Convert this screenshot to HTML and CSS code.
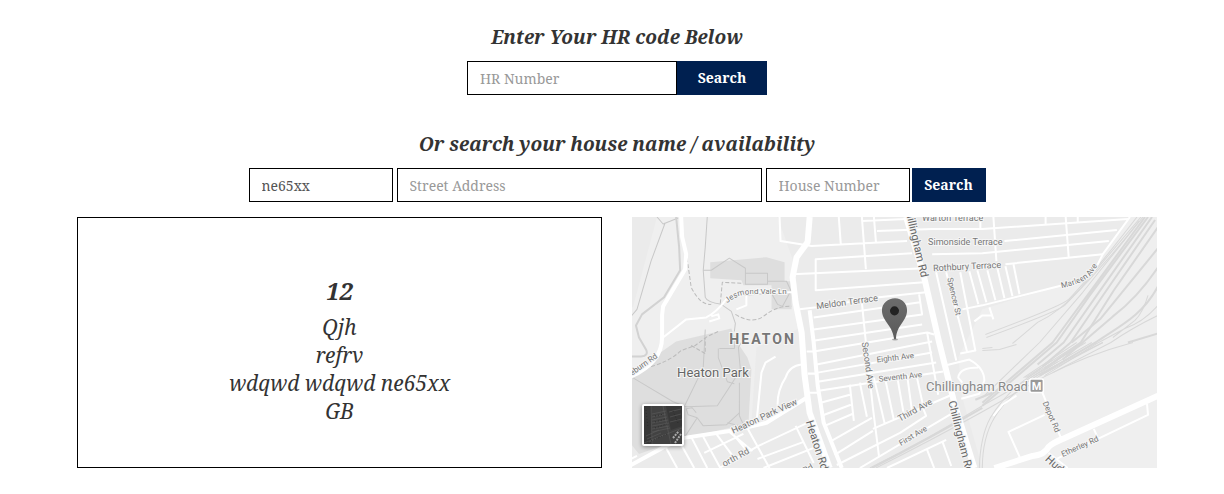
FILE: index.html
```html
<!DOCTYPE html>
<html lang="en">
<head>
    <meta charset="UTF-8">
    <meta name="viewport" content="width=device-width, initial-scale=1.0">
    <title>House search</title>
    <link rel="stylesheet" href="styles.css">
</head>
<body>
    <main class="page">
        <form class="search">
            <h2><label for="hr-number">Enter Your HR code Below</label></h2>
            <div class="hr-row">
                <input type="text" id="hr-number" placeholder="HR Number">
                <button type="submit">Search</button>
            </div>
        </form>

        <form class="search">
            <h2>Or search your house name / availability</h2>
            <div class="house-row">
                <input type="text" class="short" aria-label="Postcode" value="ne65xx">
                <input type="text" class="long" aria-label="Street Address" placeholder="Street Address">
                <input type="text" class="short" aria-label="House Number" placeholder="House Number">
                <button type="submit">Search</button>
            </div>
        </form>

        <section class="results">
            <div class="address">
                <h3>12</h3>
                <p>Qjh<br>refrv<br>wdqwd wdqwd ne65xx<br>GB</p>
            </div>

            <div class="map">
                <svg class="map-canvas" viewBox="0 0 525 250" preserveAspectRatio="xMidYMid slice" role="img" aria-label="Map of Heaton">
                    <defs>
                        <path id="jesmond" d="M96 86Q106 77 119 77L160 77"/>
                        <path id="marleen" d="M429 71Q451 66 458 58Q464 50 472 37"/>
                        <linearGradient id="pin" x1="0" y1="0" x2="0" y2="1">
                            <stop offset="0" stop-color="#6c6c6c"/>
                            <stop offset="1" stop-color="#5a5a5a"/>
                        </linearGradient>
                    </defs>

                    <!-- built-up areas -->
                    <path class="urban" d="M146 0H497L470 38L460 58L350 92L326 140L330 180L350 250H0V225L120 205L125 130L170 110L162 45Z"/>
                    <path class="urban" d="M0 0H26L2 90L0 90Z"/>

                    <!-- parks -->
                    <path class="park" d="M79 45L135 40L153 45V64H160V92H140V68H112L110 63L79 61Z"/>
                    <path class="park" d="M0 160L28 136L45 124L100 111L104 122L116 140L120 152L117 206L53 220L8 236L0 226Z"/>

                    <!-- railways -->
                    <g class="rail">
                        <path d="M504 0C490 18 462 55 436 82Q428 89 353 117M506 4C480 38 450 70 432 88Q425 94 354 120"/>
                        <path d="M508 0L447 72Q428 94 405 105L380 126M510 0L450 75L407 125L350 180"/>
                        <path d="M525 88Q510 105 492 111L464 126L412 158M525 98Q500 110 478 125L420 155M515 78Q510 95 502 103L480 120"/>
                        <path d="M500 125Q455 137 412 159L350 194Q300 222 244 250M450 125Q400 161 350 188Q300 219 238 250M470 125L415 152"/>
                        <path d="M350 133L367 132L384 127M350 131L360 130M420 142L390 164Q370 180 358 200Q348 218 347 250M425 144L394 165Q372 183 362 200Q350 220 350 250"/>
                        <path d="M444 125L391 160M448 125L393 160M453 125L395 160M459 125L398 160M464 125L401 160M470 125L404 160"/>
                    </g>
                    <g class="rail wide">
                        <path d="M495 125L525 116M343 182L360 175M240 250Q300 219 350 190"/>
                        <path d="M512 0L420 125L350 185M515 0L457 78L424 125L350 188M519 0L466 75L431 125L405 147M522 3L473 74L438 125L410 149M525 10L481 73L448 125L412 151"/>
                        <path d="M525 31L468 101L439 125M525 50Q505 80 480 99L430 142M525 69C510 97 490 107 464 124L407 158"/>
                    </g>

                    <!-- footpaths -->
                    <g class="path">
                        <path d="M26 0L32 7L47 1M34 6L20 44L6 92L0 99M76 0L74 30L72 53L74 80Q76 85 90 87"/>
                        <path d="M72 53H80L98 41L114 51V67H136V56H114M136 64H155L160 75M90 87L100 94L104 106L103 114M113 78L140 76L146 87L151 89L158 76"/>
                        <path d="M0 159L42 184L55 189L86 188L101 165L109 152L107 130L110 125M54 187L72 150L74 112M53 220L66 200L72 208L95 207L108 195M88 131H103L104 118M87 131V140L96 164L103 166M66 200L57 197L55 191L61 190L65 195M108 165V198L112 207M96 205L108 208"/>
                    </g>
                    <path class="path dashed" d="M55 35L60 70Q69 88 80 87M89 86L91 65L110 66M104 97Q120 107 132 99Q145 88 160 89M20 149Q38 144 50 133L64 128L76 119L87 114M60 128L74 136V120"/>
                    <path class="path thick" d="M45 0L48 30L49 53L33 80L11 97L5 108L8 120L15 132Q18 138 10 139L0 139"/>

                    <!-- side streets -->
                    <g class="street">
                        <path d="M148 0L149 24L180 29L275 24M207 0L209 27M230 0L234 52M242 0L244 25M230 4L275 2M245 14L300 12L350 12L495 2M372 24L484 13M300 37L350 36L476 24M373 47L470 37"/>
                        <path d="M161 57L292 51M280 36L184 42V73L292 65M168 92L185 90L247 80L294 75M361 0L364 44M433 0L436 40M413 0V7M445 0V5M348 0V11"/>
                        <path d="M182 100L288 85M182 112L290 97L287 77M183 123L290 107M182 134L295 115L302 117M185 147L300 124M186 155L300 135M186 164L304 145M187 173L311 154M175 134H183M176 156H186M176 175H187M295 115L306 177"/>
                        <path d="M230 85L234 125L241 190L247 238M218 167L222 203M228 165L235 199M189 185L218 177M190 198L219 187M193 208L221 196M198 224L240 200M203 237L241 213M205 247L268 215L294 198L290 188"/>
                        <path d="M242 160L253 207M253 160L262 203M265 158L272 198M275 157L280 194M284 156L291 188M241 211L322 176M228 250L319 196"/>
                        <path d="M304 55L324 143M314 55L335 135M328 55L343 133L328 136M337 54L346 87M345 53L354 85M355 53L363 83M365 51L372 81M373 49L380 79M381 47L387 77"/>
                        <path d="M497 0L470 37L464 49Q457 62 430 68L350 88L330 92M342 104L350 98H360M357 90L361 102"/>
                        <path d="M313 148L337 142Q352 150 352 163L347 176L329 181M346 150Q327 150 326 160L330 165M361 198L370 187L384 178"/>
                        <path d="M255 250L314 222M295 232L302 250M310 223L319 248M409 173L429 222M412 197L376 214L388 241M461 211L465 220M424 241L463 222L515 197L514 186M416 235L435 250"/>
                        <path d="M32 120L55 102L75 100Q85 95 95 82Q105 75 125 75H163M78 104L88 101L87 97L80 99M105 92L115 88V78"/>
                        <path d="M144 139L134 145L130 155L125 205M170 147Q158 148 154 160Q146 172 146 187"/>
                        <path d="M88 250L127 228L180 203M113 205L138 250M98 214L121 233M85 216L105 243M71 217L89 250M60 219L76 250M48 223L63 250M35 230L46 250M0 241L6 238M73 235L112 216M126 241L172 224M132 250L182 230M164 208L182 245M99 213L118 236"/>
                    </g>
                    <path class="street medium" d="M50 0L51 20L55 37L54 52L32 89L31 98V120Q31 145 0 159"/>
                    <path class="street medium" d="M0 247L35 228L53 220L100 213L135 205L175 180M178 93L182 125L186 168L192 205L210 250"/>

                    <!-- main roads -->
                    <path class="road" d="M178 0L176 25L165 40L161 60L164 85L170 115L173 158L178 195L198 250"/>
                    <path class="road" d="M274 0L292 60L307 125L322 185L342 250M362 250L400 238Q412 237 416 229Q420 225 430 221L525 178"/>

                    <g class="label">
                        <text x="290" y="4">Warton Terrace</text>
                        <text x="296" y="28">Simonside Terrace</text>
                        <text transform="translate(301 54) rotate(-3)">Rothbury Terrace</text>
                        <text transform="translate(185 92) rotate(-8)">Meldon Terrace</text>
                        <text class="small" transform="translate(315 61) rotate(77)">Spencer St</text>
                        <text class="small"><textPath href="#jesmond">Jesmond Vale Ln</textPath></text>
                        <text class="small"><textPath href="#marleen">Marleen Ave</textPath></text>
                        <text transform="translate(230 125) rotate(82)">Second Ave</text>
                        <text class="small" transform="translate(245 145) rotate(-7)">Eighth Ave</text>
                        <text class="small" transform="translate(247 164) rotate(-6)">Seventh Ave</text>
                        <text transform="translate(268 204) rotate(-29)">Third Ave</text>
                        <text class="small" transform="translate(269 228) rotate(-31)">First Ave</text>
                        <text transform="translate(102 216) rotate(-25)">Heaton Park View</text>
                        <text class="small" transform="translate(1 158) rotate(-35)">eburn Rd</text>
                        <text transform="translate(93 249) rotate(-29)">orth Rd</text>
                        <text transform="translate(173 256) rotate(-29)">Rd</text>
                        <text class="small" transform="translate(410 185) rotate(67)">Depot Rd</text>
                        <text class="small" transform="translate(430 239) rotate(-24)">Etherley Rd</text>
                    </g>
                    <g class="label major">
                        <text transform="translate(274 -4) rotate(77)">hillingham Rd</text>
                        <text transform="translate(316 184) rotate(76)">Chillingham Rd</text>
                        <text transform="translate(174 204) rotate(72)">Heaton Rd</text>
                        <text transform="translate(412 242) rotate(42)">Hud</text>
                    </g>
                    <text class="label district" x="98" y="126">HEATON</text>
                    <text class="label place" x="46" y="159">Heaton Park</text>
                    <text class="label place station" x="294" y="173">Chillingham Road</text>

                    <!-- metro sign -->
                    <rect x="398" y="162" width="12" height="12" rx="1" fill="#999" stroke="#fff" stroke-width="3" paint-order="stroke"/>
                    <text class="metro" x="404" y="172">M</text>

                    <!-- marker -->
                    <ellipse cx="263" cy="122" rx="3" ry="1" fill="#aaa"/>
                    <path d="M263 81C256 81 250 86 250 93C250 104 260 107 262 121Q263 123 264 121C265 107 275 104 275 93C275 86 270 81 263 81Z" fill="url(#pin)"/>
                    <circle cx="262.500" cy="93.500" r="4.500" fill="#222"/>
                </svg>

                <button type="button" class="satellite" aria-label="Show satellite imagery">
                    <svg viewBox="0 0 38 38">
                        <path fill="#424242" d="M0 0H38V38H0Z"/>
                        <path fill="#383838" d="M0 0H7L8 38H0ZM22 0H38V20L27 24Z"/>
                        <g fill="none" stroke="#5c5c5c" stroke-width=".6">
                            <path d="M7 0L8 38M19 0L23 20L27 38M0 37L38 22M8 8L22 5M8 11L22 8M8 14L23 11M8 17L24 14M8 20L25 17M8 23L25 20M8 26L26 22M2 30L15 24M3 33L17 27M5 36L20 29M25 6L37 3M26 11L37 8M26 16L38 13"/>
                        </g>
                        <path stroke="#2c2c2c" stroke-dasharray="1 2" d="M2 4L4 22M11 10L20 8M11 16L21 13M11 22L23 18M29 5L34 17M14 32L23 28M7 35L16 31"/>
                        <path stroke="#aaa" stroke-width="2" stroke-dasharray="2 1" d="M29 32L35 25M31 37L37 28"/>
                    </svg>
                </button>
            </div>
        </section>
    </main>
</body>
</html>
```
FILE: styles.css
```css
* {
    box-sizing: border-box;
}
body {
    margin: 0;
    background: #fff;
    color: #333;
    font-family: "Droid Serif", "Noto Serif", "DejaVu Serif Condensed", "DejaVu Serif", serif;
}
.page {
    padding: 24px 67px 24px 77px;
}
.search {
    text-align: center;
}
h2 {
    margin: 0 0 11px;
    font-size: 19px;
    line-height: 26px;
    font-style: italic;
}
.hr-row,
.house-row {
    display: flex;
    justify-content: center;
}
.hr-row {
    margin-bottom: 36px;
}
.hr-row input {
    width: 210px;
}
.hr-row button {
    width: 90px;
}
.house-row {
    gap: 4px;
    margin-bottom: 15px;
}
.house-row .short {
    width: 144px;
}
.house-row .long {
    width: 365px;
}
.house-row button {
    width: 74px;
    margin-left: -2px;
}
input {
    min-width: 0;
    height: 34px;
    padding: 6px 12px;
    border: 1px solid #000;
    border-radius: 0;
    background: #fff;
    color: #555;
    font-family: inherit;
    font-size: 14px;
}
input::placeholder {
    color: #999;
}
button {
    height: 34px;
    padding: 0 0 2px;
    border: 0;
    background: #002050;
    color: #fff;
    font-family: inherit;
    font-size: 14px;
    font-weight: bold;
    cursor: pointer;
}
.results {
    display: grid;
    grid-template-columns: 1fr 1fr;
    gap: 30px;
}
.address {
    padding: 57px 20px 42px;
    border: 1px solid #000;
    text-align: center;
    font-size: 21px;
    line-height: 28px;
    font-style: italic;
}
.address h3 {
    margin: 0 0 6px;
    font-size: 24px;
    line-height: 32px;
}
.address p {
    margin: 0;
}
.map {
    position: relative;
    overflow: hidden;
    background: #efefef;
}
.map-canvas {
    display: block;
    width: 100%;
    height: 100%;
}
.urban {
    fill: #ebebeb;
}
.park {
    fill: #dedede;
}
.rail,
.path,
.street,
.road {
    fill: none;
    stroke-linejoin: round;
}
.rail {
    stroke: #d8d8d8;
    stroke-width: 1;
}
.rail.wide {
    stroke-width: 2;
}
.path {
    stroke: #c8c8c8;
    stroke-width: 1;
}
.path.dashed {
    stroke: #bbb;
    stroke-dasharray: 4 2;
}
.path.thick {
    stroke: #d2d2d2;
    stroke-width: 2;
}
.street {
    stroke: #fff;
    stroke-width: 2;
}
.street.medium {
    stroke-width: 4;
}
.road {
    stroke: #fff;
    stroke-width: 6;
}
.label {
    fill: #777;
    stroke: #f5f5f5;
    stroke-width: 2;
    paint-order: stroke;
    font-family: Roboto, sans-serif;
    font-size: 9px;
}
.label .small {
    font-size: 8px;
}
.label.major {
    fill: #666;
    font-size: 11px;
}
.label.district {
    fill: #777;
    font-size: 14px;
    font-weight: bold;
    letter-spacing: 2px;
}
.label.place {
    fill: #666;
    font-size: 13px;
}
.label.station {
    fill: #888;
}
.metro {
    fill: #fff;
    font-family: Roboto, sans-serif;
    font-size: 11px;
    font-weight: bold;
    text-anchor: middle;
}
.satellite {
    position: absolute;
    left: 10px;
    bottom: 22px;
    width: 42px;
    height: 42px;
    padding: 2px;
    border-radius: 2px;
    background: #fff;
    box-shadow: 0 1px 4px rgba(0, 0, 0, 0.4);
}
.satellite svg {
    display: block;
}
```
